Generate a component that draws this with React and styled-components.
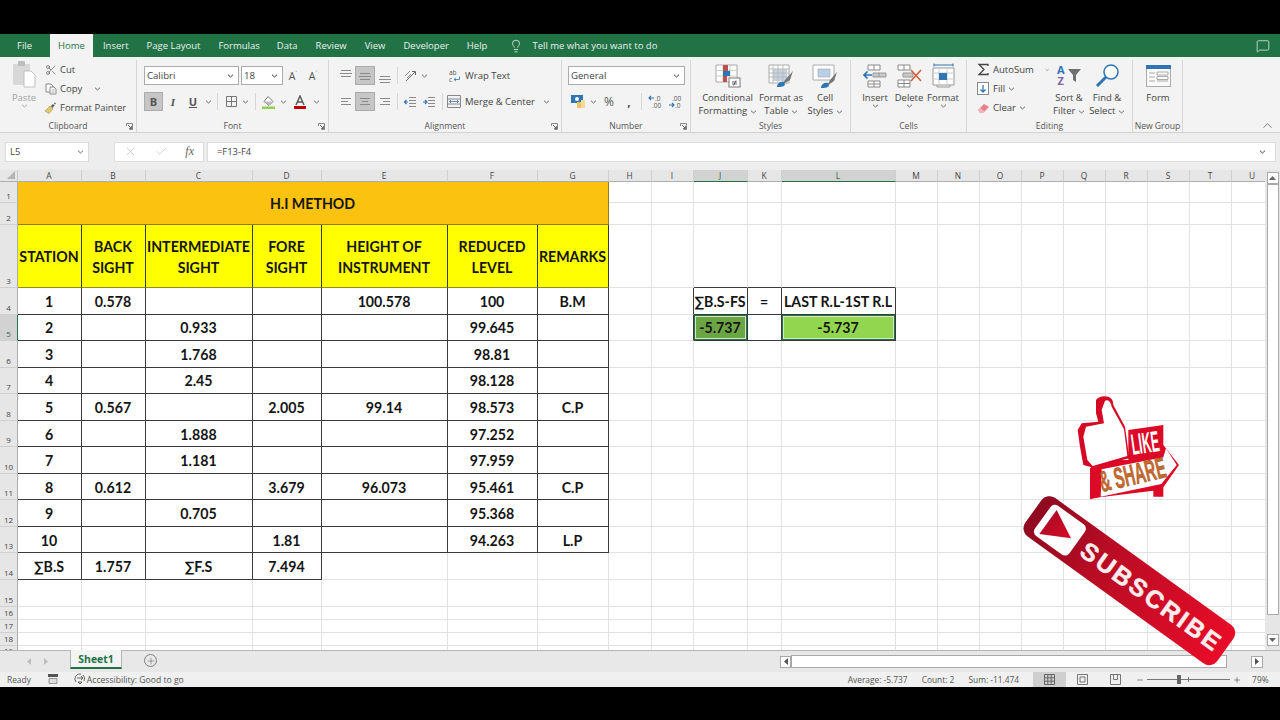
import React from 'react';
import styled, { createGlobalStyle } from 'styled-components';
import { X, Check, Lightbulb, MessageSquare, ChevronUp, Scissors, Plus, Minus } from 'lucide-react';

const UI = `"Open Sans", "Noto Sans", sans-serif`;
const SHEET = `Lato, "Liberation Sans", sans-serif`;

const Global = createGlobalStyle`
  html, body { margin: 0; padding: 0; background: #000; }
  * { box-sizing: border-box; }
`;

const Page = styled.div`
  position: relative;
  width: 1280px;
  height: 720px;
  background: #000;
  padding: 34px 0 33px;
  overflow: hidden;
  font-family: ${UI};
  color: #444;
  display: flex;
  flex-direction: column;
`;

/* tabs */
const TabBar = styled.div`
  height: 23px;
  flex: none;
  background: #217346;
  display: flex;
  align-items: stretch;
  padding-left: 8px;
  padding-right: 10px;
  font-size: 9.5px;
  color: #e8f1ec;
`;
const Tab = styled.div`
  display: flex;
  align-items: center;
  padding: 0 ${p => p.$pad || 9}px;
  margin-right: ${p => p.$mr || 0}px;
  ${p => p.$active && `background:#f3f3f3;color:#217346;`}
`;
const TellMe = styled.div`
  display: flex;
  align-items: center;
  gap: 9px;
  margin-left: 13px;
  flex: 1;
`;

/* ribbon */
const Ribbon = styled.div`
  height: 76px;
  flex: none;
  background: #f3f3f3;
  border-bottom: 1px solid #d2d2d2;
  display: flex;
  font-size: 9.5px;
  position: relative;
`;
const Group = styled.div`
  width: ${p => p.$w}px;
  flex: none;
  margin-top: 3px;
  border-right: 1px solid #d6d6d6;
  display: flex;
  flex-direction: column;
`;
const GroupBody = styled.div`
  flex: 1;
  display: flex;
  padding-left: ${p => p.$pl || 0}px;
  min-height: 0;
`;
const GroupLabel = styled.div`
  height: 11px;
  flex: none;
  font-size: 8.6px;
  line-height: 11px;
  text-align: center;
  color: #555;
  position: relative;
`;
const Launcher = styled.svg`
  position: absolute;
  right: 3px;
  top: 2px;
`;
const Stack = styled.div`
  display: flex;
  flex-direction: column;
  flex: none;
  width: ${p => (p.$w ? `${p.$w}px` : 'auto')};
  margin-left: ${p => p.$ml || 0}px;
  padding-top: ${p => p.$pt || 0}px;
  gap: ${p => p.$gap || 0}px;
`;
const SmallRow = styled.div`
  display: flex;
  align-items: center;
  height: ${p => p.$h || 19}px;
  gap: ${p => p.$gap || 0}px;
  white-space: nowrap;
`;
const Spacer = styled.span`
  width: ${p => p.$w}px;
  flex: none;
`;
const IconSlot = styled.span`
  width: ${p => p.$w}px;
  height: 100%;
  flex: none;
  display: flex;
  align-items: center;
  justify-content: center;
  font-size: ${p => p.$fs || 11}px;
  font-family: ${p => p.$serif ? '"Liberation Serif", serif' : 'inherit'};
  font-weight: ${p => p.$bold ? 700 : 400};
  font-style: ${p => p.$italic ? 'italic' : 'normal'};
  text-decoration: ${p => p.$under ? 'underline' : 'none'};
  color: #555;
  ${p => p.$on && `background:#c6c6c6;border:1px solid #ababab;`}
`;
const Divider = styled.span`
  width: 1px;
  height: 17px;
  flex: none;
  background: #d6d6d6;
  margin: 0 ${p => p.$m || 5}px;
`;
const Select = styled.div`
  width: ${p => p.$w}px;
  height: 19px;
  flex: none;
  background: #fff;
  border: 1px solid #ababab;
  display: flex;
  align-items: center;
  justify-content: space-between;
  padding: 0 4px 0 2px;
  margin-right: ${p => p.$mr || 0}px;
  font-size: 9.6px;
`;
const Big = styled.div`
  width: ${p => p.$w}px;
  flex: none;
  display: flex;
  flex-direction: column;
  align-items: center;
  color: ${p => p.$dim ? '#a2a2a2' : '#444'};
  font-size: 9.5px;
  line-height: 13px;
  text-align: center;
`;
const BigIcon = styled.div`
  height: 31px;
  flex: none;
  display: flex;
  align-items: flex-end;
  justify-content: center;
  padding-bottom: 3px;
`;
const BigText = styled.div`
  white-space: nowrap;
`;
const Collapse = styled.div`
  position: absolute;
  right: 5px;
  bottom: -1px;
  color: #555;
  display: flex;
`;

/* formula bar */
const FormulaBar = styled.div`
  height: 37px;
  flex: none;
  background: #ededed;
  display: flex;
  align-items: center;
  padding: 0 4px 0 5px;
  font-size: 9.4px;
`;
const Box = styled.div`
  height: 20px;
  background: #fff;
  border: 1px solid #dcdcdc;
  display: flex;
  align-items: center;
  flex: ${p => p.$w ? 'none' : 1};
  width: ${p => p.$w ? `${p.$w}px` : 'auto'};
  margin-left: ${p => p.$ml || 0}px;
  padding: 0 ${p => p.$pad || 4}px;
  justify-content: ${p => p.$jc || 'flex-start'};
`;
const Fx = styled.span`
  font-family: "Liberation Serif", serif;
  font-style: italic;
  font-size: 12px;
  color: #666;
`;

/* sheet */
const SheetArea = styled.div`
  height: 480px;
  flex: none;
  display: flex;
  background: #fff;
`;
const SheetGrid = styled.div`
  flex: 1;
  overflow: hidden;
  display: grid;
  grid-template-columns: ${p => p.$cols};
  grid-template-rows: ${p => p.$rows};
  font-family: ${SHEET};
`;
const Corner = styled.div`
  background: #e6e6e6;
  border-right: 1px solid #c9c9c9;
  border-bottom: 1px solid #aeaeae;
  display: flex;
  align-items: flex-end;
  justify-content: flex-end;
  padding: 2px;
`;
const ColHead = styled.div`
  background: ${p => p.$on ? '#d2d2d2' : '#e6e6e6'};
  border-right: 1px solid #cfcfcf;
  border-bottom: 1px solid ${p => p.$on ? '#217346' : '#aeaeae'};
  font-family: ${UI};
  font-size: 8.4px;
  line-height: 11px;
  text-align: center;
  padding-right: 1px;
  color: ${p => p.$on ? '#33664a' : '#444'};
`;
const RowHead = styled.div`
  background: ${p => p.$on ? '#d2d2d2' : '#e6e6e6'};
  border-right: 1px solid ${p => p.$on ? '#217346' : '#aeaeae'};
  border-bottom: 1px solid #cfcfcf;
  font-family: ${UI};
  font-size: 8px;
  line-height: 10px;
  display: flex;
  align-items: flex-end;
  justify-content: center;
  padding-bottom: 1px;
  overflow: hidden;
  color: ${p => p.$on ? '#33664a' : '#444'};
`;
const Cell = styled.div`
  background: ${p => p.$bg || '#fff'};
  border-right: 1px solid ${p => p.$line || '#e2e2e2'};
  border-bottom: 1px solid ${p => p.$lineB || p.$line || '#e2e2e2'};
  display: flex;
  align-items: center;
  justify-content: center;
  text-align: center;
  padding: 1px 1px 0 0;
  font-size: 14.2px;
  font-weight: 700;
  line-height: 21px;
  color: #151515;
  white-space: pre-line;
  ${p => p.$span && `grid-column: ${p.$span.col}; grid-row: ${p.$span.row};`}
  ${p => p.$sel && `box-shadow: inset 0 0 0 1px #217346, inset 0 0 0 2px #d8e8c8;`}
`;

const VScroll = styled.div`
  width: 15px;
  flex: none;
  background: #e6e6e6;
  display: flex;
  flex-direction: column;
  align-items: center;
  padding-top: 2px;
`;
const ScrollBtn = styled.div`
  width: ${p => p.$w || 12}px;
  height: 12px;
  flex: none;
  background: #fff;
  border: 1px solid #a9a9a9;
  display: flex;
  align-items: center;
  justify-content: center;
  margin-top: ${p => p.$mt || 0}px;
`;
const VThumb = styled.div`
  width: 12px;
  height: 431px;
  flex: none;
  background: #fff;
  border: 1px solid #a9a9a9;
`;

/* sheet tabs */
const SheetBar = styled.div`
  height: 22px;
  flex: none;
  background: #e8e8e8;
  border-top: 1px solid #b5b5b5;
  display: flex;
  align-items: flex-start;
`;
const NavArrows = styled.div`
  width: 70px;
  flex: none;
  height: 100%;
  display: flex;
  align-items: center;
  justify-content: center;
  gap: 13px;
  padding-left: 5px;
`;
const SheetTab = styled.div`
  width: 52px;
  height: 19px;
  margin-top: -1px;
  flex: none;
  background: #f3f3f3;
  border-left: 1px solid #b5b5b5;
  border-right: 1px solid #b5b5b5;
  border-bottom: 2px solid #217346;
  color: #217346;
  font-size: 10.4px;
  font-weight: 700;
  text-align: center;
  line-height: 18px;
`;
const AddSheet = styled.div`
  width: 13px;
  height: 13px;
  margin: 3px 0 0 22px;
  flex: none;
  border: 1px solid #808080;
  border-radius: 50%;
  display: flex;
  align-items: center;
  justify-content: center;
  color: #666;
`;
const HScroll = styled.div`
  margin: 4px 0 0 623px;
  width: 486px;
  display: flex;
  align-items: center;
  height: 13px;
`;
const HThumb = styled.div`
  width: 436px;
  height: 13px;
  flex: none;
  background: #fff;
  border: 1px solid #a9a9a9;
  margin-right: 24px;
`;

/* status bar */
const StatusBar = styled.div`
  height: 15px;
  flex: none;
  background: #f0f0f0;
  display: flex;
  align-items: center;
  padding-left: 7px;
  font-size: 8.4px;
  color: #555;
`;
const StatusText = styled.span`
  margin-left: ${p => p.$ml || 0}px;
  white-space: nowrap;
  font-size: ${p => p.$fs || 8.4}px;
`;
const ViewBtn = styled.span`
  width: 33px;
  height: 15px;
  flex: none;
  display: flex;
  align-items: center;
  justify-content: center;
  background: ${p => p.$on ? '#cfcfcf' : 'transparent'};
`;
const Slider = styled.div`
  width: 83px;
  height: 1px;
  flex: none;
  background: #777;
  margin: 0 3px;
  position: relative;
`;
const SliderKnob = styled.span`
  position: absolute;
  left: 30px;
  top: -4px;
  width: 4px;
  height: 9px;
  background: #666;
`;
const SliderTick = styled.span`
  position: absolute;
  left: 41px;
  top: -2px;
  width: 1px;
  height: 5px;
  background: #777;
`;

const Stickers = styled.svg`
  position: absolute;
  left: 1000px;
  top: 380px;
  pointer-events: none;
`;

/* small drawings */
const Chev = ({ c = '#666' }) => (
  <svg width="7" height="4" viewBox="0 0 7 4"><path d="M1 .7 3.5 3 6 .7" fill="none" stroke={c} /></svg>
);
const Corner9 = () => (
  <Launcher width="7" height="7" viewBox="0 0 7 7">
    <path d="M.5 3V.5H6.5V6.5H3.5" fill="none" stroke="#888" />
    <path d="M2 2 5.5 5.5M3.2 5.5H5.5V3.2" fill="none" stroke="#666" />
  </Launcher>
);
const Ico = ({ w = 14, h = 14, children }) => (
  <svg width={w} height={h} viewBox={`0 0 ${w} ${h}`}>{children}</svg>
);
const Lines = ({ y, xs = [2, 1, 2], xe = [12, 13, 12] }) => (
  <path d={xs.map((x, i) => `M${x} ${y + i * 3 + 0.5}H${xe[i]}`).join('')} stroke="#8a8a8a" fill="none" />
);

const PasteIcon = () => (
  <Ico w={24} h={28}>
    <rect x="1" y="4" width="17" height="21" rx="1" fill="#d8d8d8" />
    <rect x="6" y="1" width="7" height="5" rx="1" fill="#bdbdbd" />
    <path d="M12 11h7l4 4v12H12z" fill="#fff" stroke="#c0c0c0" />
  </Ico>
);
const CopyIcon = () => (
  <Ico w={12} h={12}>
    <path d="M1 1h5l2 2v6H1z" fill="#fff" stroke="#888" />
    <path d="M5 4h4l2 2v5H5z" fill="#fff" stroke="#888" />
    <path d="M6.5 7h3M6.5 9h3" stroke="#aaa" />
  </Ico>
);
const BrushIcon = () => (
  <Ico w={13} h={12}>
    <path d="M1 9 6 4l3 3-4 4.5z" fill="#e3c773" stroke="#a98f46" strokeWidth=".6" />
    <path d="M7 4l2-2 1.5 1.5-2 2.5z" fill="#555" />
    <path d="M11 .5v2M10 1.5h2" stroke="#666" strokeWidth=".7" />
  </Ico>
);
const BordersIcon = () => (
  <Ico w={13} h={13}><path d="M1.5 1.5h10v10h-10zM6.5 1.5v10M1.5 6.5h10" fill="none" stroke="#777" /></Ico>
);
const FillIcon = () => (
  <Ico w={15} h={14}>
    <path d="M7 1.5 12 6.5 8 10.5 3 6.5z" fill="#fff" stroke="#777" />
    <path d="M3 6.5h9L8 10.5z" fill="#bbb" />
    <rect x="1" y="11.5" width="13" height="2.5" fill="#92d050" />
  </Ico>
);
const FontColorIcon = () => (
  <Ico w={14} h={14}>
    <path d="M3 10 7 1l4 9M4.5 7h5" fill="none" stroke="#555" strokeWidth="1.4" />
    <rect x="1" y="11" width="12" height="3" fill="#c00000" />
  </Ico>
);
const GrowA = ({ up }) => (
  <IconSlot $w={20} $fs={10.5}>A<sup style={{ fontSize: 6, marginTop: -5 }}>{up ? '˄' : '˅'}</sup></IconSlot>
);
const OrientIcon = () => (
  <Ico w={14} h={13}>
    <path d="M3 12 12 3M9 2.5h3.5V6" fill="none" stroke="#666" />
    <path d="M2 7l5-5M4 9l4-4" stroke="#8a8a8a" fill="none" />
  </Ico>
);
const IndentIcon = ({ flip }) => (
  <Ico w={14} h={12}>
    <path d="M6 1.5h7M6 4.5h7M6 7.5h7M6 10.5h7" stroke="#8a8a8a" />
    <path d={flip ? 'M1 6h3M3 4l2 2-2 2' : 'M5 6H2M3.5 4 1.5 6l2 2'} fill="none" stroke="#2e75b6" strokeWidth="1.2" />
  </Ico>
);
const WrapIcon = () => (
  <Ico w={13} h={13}>
    <text x="0" y="6" fontSize="6.5" fill="#555" fontFamily={UI}>ab</text>
    <text x="0" y="12.5" fontSize="6.5" fill="#555" fontFamily={UI}>c</text>
    <path d="M5 10.5h5.5V7.5M7 9l-2 1.5 2 1.5" fill="none" stroke="#2e75b6" strokeWidth=".8" />
  </Ico>
);
const MergeIcon = () => (
  <Ico w={14} h={13}>
    <path d="M.5.5h13v12H.5zM.5 4h13M.5 9h13" fill="none" stroke="#888" />
    <path d="M2.5 6.5h9M4 5 2.5 6.5 4 8M10 5l1.5 1.5L10 8" fill="none" stroke="#2e75b6" strokeWidth=".8" />
  </Ico>
);
const CurrencyIcon = () => (
  <Ico w={16} h={15}>
    <rect x="1" y="1" width="12" height="8" fill="#2e75b6" />
    <circle cx="7" cy="5" r="2" fill="#fff" />
    <rect x="7" y="8" width="4" height="6" fill="#e9c46a" />
    <rect x="11" y="6" width="4" height="8" fill="#f1d999" />
  </Ico>
);
const DecimalIcon = ({ dec }) => (
  <Ico w={15} h={15}>
    <text x={dec ? 4 : 7} y="6.5" fontSize="6.5" fill="#555" fontFamily={UI}>{dec ? '.00' : '.0'}</text>
    <text x={dec ? 7 : 4} y="13.5" fontSize="6.5" fill="#555" fontFamily={UI}>{dec ? '.0' : '.00'}</text>
    <path d={dec ? 'M1 11h5M4 9l2 2-2 2' : 'M6 4H1M3 2 1 4l2 2'} fill="none" stroke="#2e75b6" strokeWidth="1.1" />
  </Ico>
);
const CondIcon = () => (
  <Ico w={26} h={24}>
    <path d="M1 1h21v17H1z" fill="#fff" stroke="#aaa" />
    <path d="M1 6.5h21M1 12h21M8 1v17M15 1v17" stroke="#ccc" />
    <rect x="8" y="1" width="5" height="6" fill="#c0504d" />
    <rect x="8" y="7" width="7" height="5" fill="#2e75b6" />
    <rect x="8" y="12" width="4" height="6" fill="#c0504d" />
    <rect x="14" y="14" width="11" height="9" fill="#fff" stroke="#777" />
    <path d="M17 18h5M17 20h5M21 16.5l-2.5 5" stroke="#444" strokeWidth=".8" fill="none" />
  </Ico>
);
const TableFmtIcon = () => (
  <Ico w={26} h={24}>
    <path d="M1 1h20v18H1z" fill="#fff" stroke="#aaa" />
    <rect x="5" y="5" width="14" height="12" fill="#c4d2e2" />
    <path d="M1 5h20M1 9h20M1 13h20M5 1v18M10 1v18M15 1v18" stroke="#bbb" />
    <path d="M14 21l3-5 8-9 -3 9z" fill="#777" />
    <path d="M9 23c0-4 4-6 7-5l1 3c-2 2-5 2-8 2z" fill="#2e75b6" />
  </Ico>
);
const CellStyleIcon = () => (
  <Ico w={26} h={24}>
    <path d="M1 1h21v15H1z" fill="#fff" stroke="#aaa" />
    <rect x="6" y="5" width="12" height="8" fill="#b8cfe6" stroke="#999" strokeWidth=".5" />
    <path d="M15 22l3-6 7-8-3 9z" fill="#777" />
    <path d="M9 24c0-4 4-6 7-5l1 3c-2 2-5 2-8 2z" fill="#2e75b6" />
  </Ico>
);
const InsertIcon = () => (
  <Ico w={24} h={24}>
    <path d="M5 1h12v5H5zM11 1v5M5 17h12v6H5zM11 17v6M5 20h12" fill="#fff" stroke="#888" />
    <path d="M10 9h13v4H10zM16 9v4" fill="#c8c8c8" stroke="#999" />
    <path d="M9 11H1M4.5 7.5 1 11l3.5 3.5" fill="none" stroke="#2e75b6" strokeWidth="1.7" />
  </Ico>
);
const DeleteIcon = () => (
  <Ico w={25} h={24}>
    <path d="M1 1h12v5H1zM7 1v5M1 16h12v7H1zM7 16v7M1 19.5h12" fill="#fff" stroke="#888" />
    <path d="M6 9h10v4H6z" fill="#c8c8c8" stroke="#999" />
    <path d="M14 6l10 11M24 6 14 17" stroke="#d2603a" strokeWidth="1.6" />
  </Ico>
);
const FormatIcon = () => (
  <Ico w={24} h={25}>
    <path d="M2 5h21v17H2z" fill="#fff" stroke="#999" />
    <path d="M2 10h21M2 16h21M8 5v17M16 5v17" stroke="#ccc" />
    <rect x="8" y="10" width="8" height="7" fill="#2e75b6" />
    <path d="M3 2h19M3 .5v3M22 .5v3" stroke="#2e75b6" fill="none" />
    <path d="M6 22v2h13v-2" stroke="#999" fill="none" />
  </Ico>
);
const SigmaIcon = () => (
  <Ico w={13} h={13}><path d="M11 3V1.5H2L7 6.5 2 11.5h9V10" fill="none" stroke="#444" strokeWidth="1.3" /></Ico>
);
const FillDownIcon = () => (
  <Ico w={13} h={13}>
    <rect x=".5" y=".5" width="11" height="12" fill="#fff" stroke="#888" />
    <path d="M6 3v7M3.5 7.5 6 10l2.5-2.5" fill="none" stroke="#2e75b6" strokeWidth="1.3" />
  </Ico>
);
const EraserIcon = () => (
  <Ico w={13} h={12}>
    <path d="M1 8 7 2l5 3-6 6H3z" fill="#e8808a" />
    <path d="M1 8l2 3h3l1.5-1.5L3.5 6z" fill="#f2b5bb" />
  </Ico>
);
const SortIcon = () => (
  <Ico w={26} h={24}>
    <text x="1" y="10" fontSize="11" fontWeight="700" fill="#2e75b6" fontFamily={UI}>A</text>
    <text x="1.5" y="21" fontSize="11" fontWeight="700" fill="#8064a2" fontFamily={UI}>Z</text>
    <path d="M12 5h13l-5 6v7l-3-2v-5z" fill="#707070" />
  </Ico>
);
const FindIcon = () => (
  <Ico w={25} h={25}>
    <circle cx="16" cy="9" r="7" fill="#fff" stroke="#2e75b6" strokeWidth="1.5" />
    <path d="M11 14 2 23" stroke="#2e75b6" strokeWidth="3" />
  </Ico>
);
const FormIcon = () => (
  <Ico w={25} h={23}>
    <rect x=".5" y=".5" width="24" height="21" fill="#fafafa" stroke="#aaa" />
    <rect x="0" y="0" width="25" height="4" fill="#2e75b6" />
    <path d="M3 8h6M3 12h6M3 16h6M11 7h11v3H11zM11 11.5h11v3H11zM11 16h11" fill="none" stroke="#aaa" />
  </Ico>
);

/* sheet data */
const colWidths = [64, 64, 107, 69, 126, 90, 71, 43, 42, 54, 34, 114, 42, 42, 42, 42, 42, 42, 42, 42, 42];
const letters = 'ABCDEFGHIJKLMNOPQRSTU'.split('');
const rowHeights = [21, 22, 63, ...Array(11).fill(26.55), 27, 12.5, 13, 13, 12];

const headers = ['STATION', 'BACK\nSIGHT', 'INTERMEDIATE\nSIGHT', 'FORE\nSIGHT', 'HEIGHT OF\nINSTRUMENT', 'REDUCED\nLEVEL', 'REMARKS'];
const table = [
  ['1', '0.578', '', '', '100.578', '100', 'B.M'],
  ['2', '', '0.933', '', '', '99.645', ''],
  ['3', '', '1.768', '', '', '98.81', ''],
  ['4', '', '2.45', '', '', '98.128', ''],
  ['5', '0.567', '', '2.005', '99.14', '98.573', 'C.P'],
  ['6', '', '1.888', '', '', '97.252', ''],
  ['7', '', '1.181', '', '', '97.959', ''],
  ['8', '0.612', '', '3.679', '96.073', '95.461', 'C.P'],
  ['9', '', '0.705', '', '', '95.368', ''],
  ['10', '', '', '1.81', '', '94.263', 'L.P'],
  ['∑B.S', '1.757', '∑F.S', '7.494', '', '', ''],
];

const DARK = '#3a3a3a';

function cellProps(r, c) {
  // r and c are 1-based, c=1 is column A
  if (r === 3 && c <= 7) return { $bg: '#ffff00', $line: DARK, $lineB: '#8f8f20', text: headers[c - 1] };
  if (r >= 4 && r <= 13 && c <= 7) return { $line: DARK, text: table[r - 4][c - 1] };
  if (r === 14 && c <= 4) return { $line: DARK, text: table[10][c - 1] };
  if (r === 4 && c === 10) return { $line: DARK, text: '∑B.S-FS' };
  if (r === 4 && c === 11) return { $line: DARK, text: '=' };
  if (r === 4 && c === 12) return { $line: DARK, text: 'LAST R.L-1ST R.L' };
  if (r === 5 && c === 10) return { $line: DARK, $bg: '#6ca644', $sel: true, text: '-5.737' };
  if (r === 5 && c === 11) return { $line: DARK, text: '' };
  if (r === 5 && c === 12) return { $line: DARK, $bg: '#92d64f', $sel: true, text: '-5.737' };
  if ((r === 4 || r === 5) && c === 9) return { $line: DARK, $lineB: '#e2e2e2', text: '' };
  if (r === 3 && (c === 10 || c === 11 || c === 12)) return { $lineB: DARK, text: '' };
  return { text: '' };
}

function Sheet() {
  const items = [<Corner key="corner"><svg width="8" height="8" viewBox="0 0 8 8"><path d="M8 0V8H0z" fill="#b5b5b5" /></svg></Corner>];
  letters.forEach(l => items.push(<ColHead key={l} $on={l === 'J' || l === 'L'}>{l}</ColHead>));
  rowHeights.forEach((_, i) => {
    const r = i + 1;
    items.push(<RowHead key={`h${r}`} $on={r === 5}>{r}</RowHead>);
    letters.forEach((l, j) => {
      const c = j + 1;
      if (r <= 2 && c <= 7) {
        if (r === 1 && c === 1) {
          items.push(
            <Cell key="title" $bg="#fbc30f" $line="#8f7a20" $span={{ col: '2 / span 7', row: '2 / span 2' }}>H.I METHOD</Cell>
          );
        }
        return;
      }
      const { text, ...rest } = cellProps(r, c);
      items.push(<Cell key={`${l}${r}`} {...rest}>{text}</Cell>);
    });
  });
  return (
    <SheetGrid
      $cols={`18px ${colWidths.map(w => `${w}px`).join(' ')}`}
      $rows={`12px ${rowHeights.map(h => `${h}px`).join(' ')}`}
    >
      {items}
    </SheetGrid>
  );
}

function StickerArt() {
  return (
    <Stickers width="270" height="300" viewBox="0 0 810 900">
      <defs>
        <linearGradient id="subGrad" x1="0" x2="1" y1="0" y2="0">
          <stop offset="0" stopColor="#8e0a20" />
          <stop offset=".35" stopColor="#b80c24" />
          <stop offset="1" stopColor="#e80c28" />
        </linearGradient>
        <linearGradient id="playGrad" x1="0" x2="1" y1="0" y2="1">
          <stop offset="0" stopColor="#a00a22" />
          <stop offset="1" stopColor="#d80c28" />
        </linearGradient>
      </defs>
      {/* like & share */}
      <path d="M385 150 490 135V195L537 255 490 322V350H460V332L300 352 270 358V265L300 240H385Z" fill="#dc0a26" />
      <path d="M305 268 490 232 498 205 530 255 484 312 302 350Z" fill="#fff" />
      <path d="M288 60Q300 45 325 50 340 55 340 75L375 140 388 235 275 262 250 255 240 200 233 150 245 130 295 125 288 100Z" fill="#d40a24" />
      <path d="M315 62Q330 55 335 80L372 148 382 228 278 258 262 240 250 170 258 140 312 130 305 90Z" fill="#fff" />
      <text transform="translate(398 224) rotate(-8)" fontFamily="Liberation Sans, sans-serif" fontWeight="700" fontSize="88" fill="#fff" textLength="84" lengthAdjust="spacingAndGlyphs">LIKE</text>
      <text transform="translate(306 336) rotate(-13)" fontFamily="Liberation Sans, sans-serif" fontWeight="700" fontSize="88" fill="#c96a2d" stroke="#8a4a20" strokeWidth="1.5" textLength="202" lengthAdjust="spacingAndGlyphs">&amp; SHARE</text>
      {/* subscribe */}
      <g transform="translate(388 602) rotate(35.8)">
        <rect x="-355" y="-71" width="710" height="142" rx="30" fill="url(#subGrad)" />
        <rect x="-321" y="-57" width="127" height="112" rx="16" fill="#fff" />
        <text x="-170" y="26" fontFamily="Liberation Sans, sans-serif" fontWeight="700" fontSize="74" fill="#fbeeee" stroke="#fbeeee" strokeWidth="1.5" textLength="498" lengthAdjust="spacing">SUBSCRIBE</text>
      </g>
      <path d="M170 390 213 475 118 462Z" fill="url(#playGrad)" />
    </Stickers>
  );
}

export default function App() {
  return (
    <Page>
      <Global />
      <TabBar>
        <Tab $mr={9}>File</Tab>
        <Tab $active $pad={8} $mr={1}>Home</Tab>
        <Tab>Insert</Tab>
        <Tab>Page Layout</Tab>
        <Tab $mr={-1}>Formulas</Tab>
        <Tab>Data</Tab>
        <Tab>Review</Tab>
        <Tab>View</Tab>
        <Tab>Developer</Tab>
        <Tab>Help</Tab>
        <TellMe>
          <Lightbulb size={14} strokeWidth={1.4} />
          Tell me what you want to do
        </TellMe>
        <MessageSquare size={14} strokeWidth={1.3} style={{ alignSelf: 'center' }} />
      </TabBar>

      <Ribbon>
        <Group $w={137}>
          <GroupBody $pl={8}>
            <Big $w={32} $dim>
              <BigIcon><PasteIcon /></BigIcon>
              <BigText>Paste</BigText>
              <Chev c="#aaa" />
            </Big>
            <Stack $ml={4}>
              <SmallRow $gap={3}><IconSlot $w={13}><Scissors size={12} strokeWidth={1.3} /></IconSlot>Cut</SmallRow>
              <SmallRow $gap={3}><IconSlot $w={13}><CopyIcon /></IconSlot>Copy<Spacer $w={6} /><Chev /></SmallRow>
              <SmallRow $gap={3}><IconSlot $w={13}><BrushIcon /></IconSlot>Format Painter</SmallRow>
            </Stack>
          </GroupBody>
          <GroupLabel>Clipboard<Corner9 /></GroupLabel>
        </Group>

        <Group $w={192}>
          <GroupBody $pl={7}>
            <Stack $pt={6} $gap={7}>
              <SmallRow>
                <Select $w={95} $mr={2}>Calibri<Chev c="#333" /></Select>
                <Select $w={42}>18<Chev c="#333" /></Select>
                <GrowA up />
                <GrowA />
              </SmallRow>
              <SmallRow>
                <IconSlot $w={19} $bold $on>B</IconSlot>
                <IconSlot $w={20} $italic $serif $bold>I</IconSlot>
                <IconSlot $w={20} $under $bold>U</IconSlot>
                <IconSlot $w={10}><Chev /></IconSlot>
                <Divider $m={4} />
                <IconSlot $w={18}><BordersIcon /></IconSlot>
                <IconSlot $w={10}><Chev /></IconSlot>
                <Divider $m={5} />
                <IconSlot $w={15}><FillIcon /></IconSlot>
                <IconSlot $w={14}><Chev /></IconSlot>
                <IconSlot $w={20}><FontColorIcon /></IconSlot>
                <IconSlot $w={12}><Chev /></IconSlot>
              </SmallRow>
            </Stack>
          </GroupBody>
          <GroupLabel>Font<Corner9 /></GroupLabel>
        </Group>

        <Group $w={233}>
          <GroupBody $pl={7}>
            <Stack $pt={6} $gap={7}>
              <SmallRow>
                <IconSlot $w={19}><Ico><Lines y={1} /></Ico></IconSlot>
                <IconSlot $w={20} $on><Ico><Lines y={4} /></Ico></IconSlot>
                <IconSlot $w={19}><Ico><Lines y={7} /></Ico></IconSlot>
                <Divider $m={3} />
                <IconSlot $w={18}><OrientIcon /></IconSlot>
                <IconSlot $w={10}><Chev /></IconSlot>
                <Spacer $w={19} />
                <IconSlot $w={14}><WrapIcon /></IconSlot>
                <Spacer $w={3} />
                Wrap Text
              </SmallRow>
              <SmallRow>
                <IconSlot $w={19}><Ico><Lines y={3} xs={[2, 2, 2]} xe={[12, 9, 12]} /></Ico></IconSlot>
                <IconSlot $w={20} $on><Ico><Lines y={3} xs={[2, 4, 2]} xe={[12, 10, 12]} /></Ico></IconSlot>
                <IconSlot $w={19}><Ico><Lines y={3} xs={[2, 5, 2]} xe={[12, 12, 12]} /></Ico></IconSlot>
                <Divider $m={3} />
                <IconSlot $w={18}><IndentIcon /></IconSlot>
                <IconSlot $w={19}><IndentIcon flip /></IconSlot>
                <Divider $m={4} />
                <IconSlot $w={14}><MergeIcon /></IconSlot>
                <Spacer $w={4} />
                Merge &amp; Center
                <Spacer $w={8} />
                <Chev />
              </SmallRow>
            </Stack>
          </GroupBody>
          <GroupLabel>Alignment<Corner9 /></GroupLabel>
        </Group>

        <Group $w={129}>
          <GroupBody $pl={6}>
            <Stack $pt={6} $gap={7}>
              <Select $w={117}>General<Chev c="#333" /></Select>
              <SmallRow>
                <IconSlot $w={20}><CurrencyIcon /></IconSlot>
                <IconSlot $w={10}><Chev /></IconSlot>
                <IconSlot $w={22} $fs={12}>%</IconSlot>
                <IconSlot $w={18} $bold $fs={12}>,</IconSlot>
                <Divider $m={3} />
                <IconSlot $w={20}><DecimalIcon /></IconSlot>
                <IconSlot $w={20}><DecimalIcon dec /></IconSlot>
              </SmallRow>
            </Stack>
          </GroupBody>
          <GroupLabel>Number<Corner9 /></GroupLabel>
        </Group>

        <Group $w={160}>
          <GroupBody $pl={9}>
            <Big $w={55}>
              <BigIcon><CondIcon /></BigIcon>
              <BigText>Conditional</BigText>
              <BigText>Formatting <Chev /></BigText>
            </Big>
            <Big $w={52}>
              <BigIcon><TableFmtIcon /></BigIcon>
              <BigText>Format as</BigText>
              <BigText>Table <Chev /></BigText>
            </Big>
            <Big $w={36}>
              <BigIcon><CellStyleIcon /></BigIcon>
              <BigText>Cell</BigText>
              <BigText>Styles <Chev /></BigText>
            </Big>
          </GroupBody>
          <GroupLabel>Styles</GroupLabel>
        </Group>

        <Group $w={116}>
          <GroupBody $pl={7}>
            <Big $w={34}><BigIcon><InsertIcon /></BigIcon><BigText>Insert</BigText><Chev /></Big>
            <Big $w={34}><BigIcon><DeleteIcon /></BigIcon><BigText>Delete</BigText><Chev /></Big>
            <Big $w={34}><BigIcon><FormatIcon /></BigIcon><BigText>Format</BigText><Chev /></Big>
          </GroupBody>
          <GroupLabel>Cells</GroupLabel>
        </Group>

        <Group $w={166}>
          <GroupBody $pl={10}>
            <Stack $w={72}>
              <SmallRow $gap={3}><IconSlot $w={13}><SigmaIcon /></IconSlot>AutoSum<Spacer $w={5} /><Chev /></SmallRow>
              <SmallRow $gap={3}><IconSlot $w={13}><FillDownIcon /></IconSlot>Fill<Chev /></SmallRow>
              <SmallRow $gap={3}><IconSlot $w={13}><EraserIcon /></IconSlot>Clear<Chev /></SmallRow>
            </Stack>
            <Big $w={40}><BigIcon><SortIcon /></BigIcon><BigText>Sort &amp;</BigText><BigText>Filter <Chev /></BigText></Big>
            <Big $w={36}><BigIcon><FindIcon /></BigIcon><BigText>Find &amp;</BigText><BigText>Select <Chev /></BigText></Big>
          </GroupBody>
          <GroupLabel>Editing</GroupLabel>
        </Group>

        <Group $w={50}>
          <GroupBody>
            <Big $w={50}><BigIcon><FormIcon /></BigIcon><BigText>Form</BigText></Big>
          </GroupBody>
          <GroupLabel>New Group</GroupLabel>
        </Group>

        <Collapse><ChevronUp size={15} strokeWidth={1.2} /></Collapse>
      </Ribbon>

      <FormulaBar>
        <Box $w={84} $jc="space-between">L5<Chev /></Box>
        <Box $w={90} $ml={25} $jc="space-between" $pad={9}>
          <X size={13} strokeWidth={1.2} color="#bdbdbd" />
          <Check size={13} strokeWidth={1.2} color="#bdbdbd" />
          <Fx>fx</Fx>
        </Box>
        <Box $ml={3} $jc="space-between" $pad={9}>=F13-F4<Chev c="#444" /></Box>
      </FormulaBar>

      <SheetArea>
        <Sheet />
        <VScroll>
          <ScrollBtn><svg width="7" height="4" viewBox="0 0 7 4"><path d="M3.5 0 7 4H0z" fill="#666" /></svg></ScrollBtn>
          <VThumb />
          <ScrollBtn $mt={19}><svg width="7" height="4" viewBox="0 0 7 4"><path d="M3.5 4 7 0H0z" fill="#666" /></svg></ScrollBtn>
        </VScroll>
      </SheetArea>

      <SheetBar>
        <NavArrows>
          <svg width="4" height="7" viewBox="0 0 4 7"><path d="M4 0V7L0 3.5z" fill="#bdbdbd" /></svg>
          <svg width="4" height="7" viewBox="0 0 4 7"><path d="M0 0V7L4 3.5z" fill="#bdbdbd" /></svg>
        </NavArrows>
        <SheetTab>Sheet1</SheetTab>
        <AddSheet><Plus size={10} strokeWidth={1.3} /></AddSheet>
        <HScroll>
          <ScrollBtn $w={11}><svg width="4" height="7" viewBox="0 0 4 7"><path d="M4 0V7L0 3.5z" fill="#555" /></svg></ScrollBtn>
          <HThumb />
          <ScrollBtn $w={12}><svg width="4" height="7" viewBox="0 0 4 7"><path d="M0 0V7L4 3.5z" fill="#555" /></svg></ScrollBtn>
        </HScroll>
      </SheetBar>

      <StatusBar>
        <StatusText>Ready</StatusText>
        <StatusText $ml={17}>
          <svg width="10" height="10" viewBox="0 0 10 10"><rect width="10" height="3" fill="#555" /><path d="M1 4.5h8v5H1z" fill="#ddd" stroke="#666" strokeWidth=".6" /></svg>
        </StatusText>
        <StatusText $ml={15}>
          <svg width="13" height="11" viewBox="0 0 13 11"><path d="M3 9A5 5 0 0 1 8 1M10 2a5 5 0 0 1 1 6M4 5h6M8 3l2 2-2 2M5 9h4l-2 2z" fill="none" stroke="#444" strokeWidth=".8" /></svg>
        </StatusText>
        <StatusText $ml={1} $fs={8.6}>Accessibility: Good to go</StatusText>
        <StatusText $ml={664}>Average: -5.737</StatusText>
        <StatusText $ml={14}>Count: 2</StatusText>
        <StatusText $ml={14}>Sum: -11.474</StatusText>
        <StatusText $ml={14} />
        <ViewBtn $on><svg width="11" height="11" viewBox="0 0 11 11"><path d="M.5.5h10v10H.5zM.5 3.8h10M.5 7.2h10M3.8.5v10M7.2.5v10" fill="none" stroke="#666" /></svg></ViewBtn>
        <ViewBtn><svg width="11" height="11" viewBox="0 0 11 11"><path d="M.5.5h10v10H.5zM3 3h5v5H3z" fill="none" stroke="#777" /></svg></ViewBtn>
        <ViewBtn><svg width="11" height="11" viewBox="0 0 11 11"><path d="M.5.5h10v10H.5zM3.5.5v5h4v-5" fill="none" stroke="#777" /></svg></ViewBtn>
        <Minus size={8} style={{ marginLeft: 4 }} />
        <Slider><SliderKnob /><SliderTick /></Slider>
        <Plus size={8} />
        <StatusText $ml={11}>79%</StatusText>
      </StatusBar>

      <StickerArt />
    </Page>
  );
}
